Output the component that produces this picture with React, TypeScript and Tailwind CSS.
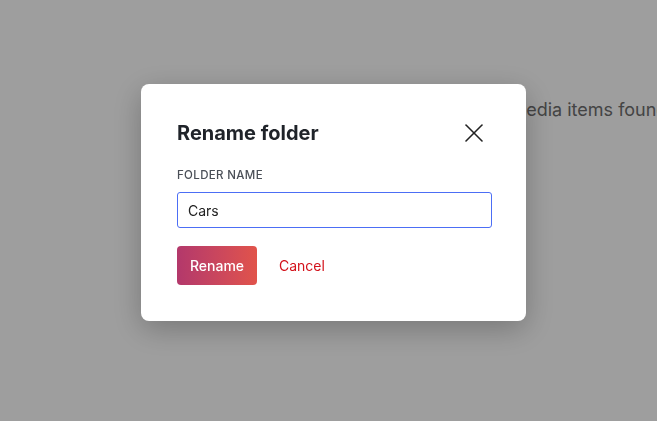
import { X } from 'lucide-react'

export default function App() {
  return (
    <div className="relative h-[421px] w-[657px] overflow-hidden bg-white font-['Inter',sans-serif]">
      <div className="pl-[481px] pt-[96px] text-[18px] whitespace-nowrap text-[#6e6e6e]">
        No media items found
      </div>

      <div className="fixed inset-0 flex justify-center bg-black/[0.38] pt-[84px] pl-[10px]">
        <div className="h-[237px] w-[385px] rounded-lg bg-white px-9 pt-[37px] shadow-[0_8px_30px_rgba(0,0,0,0.25)]">
          <div className="flex h-6 items-center justify-between">
            <h2 className="text-[20px] font-bold leading-6 text-[#1f2329]">Rename folder</h2>
            <button className="-my-1 text-[#222]">
              <X size={32} strokeWidth={1.2} />
            </button>
          </div>

          <label className="mt-[22px] block text-[11.5px] font-medium tracking-[0.03em] text-[#4a4f57]">
            FOLDER NAME
          </label>
          <input
            defaultValue="Cars"
            className="mt-[8px] h-[36px] w-[315px] rounded-[3px] border-[1.5px] border-[#4c6ef5] px-[10px] text-[14px] text-[#222] outline-none"
          />

          <div className="mt-[18px] flex items-center gap-[22px]">
            <button className="h-[39px] w-[80px] rounded-[4px] bg-gradient-to-r from-[#b3386b] to-[#e1534a] text-[14px] font-medium text-white">
              Rename
            </button>
            <button className="text-[14px] font-normal text-[#d3121b]">Cancel</button>
          </div>
        </div>
      </div>
    </div>
  )
}
